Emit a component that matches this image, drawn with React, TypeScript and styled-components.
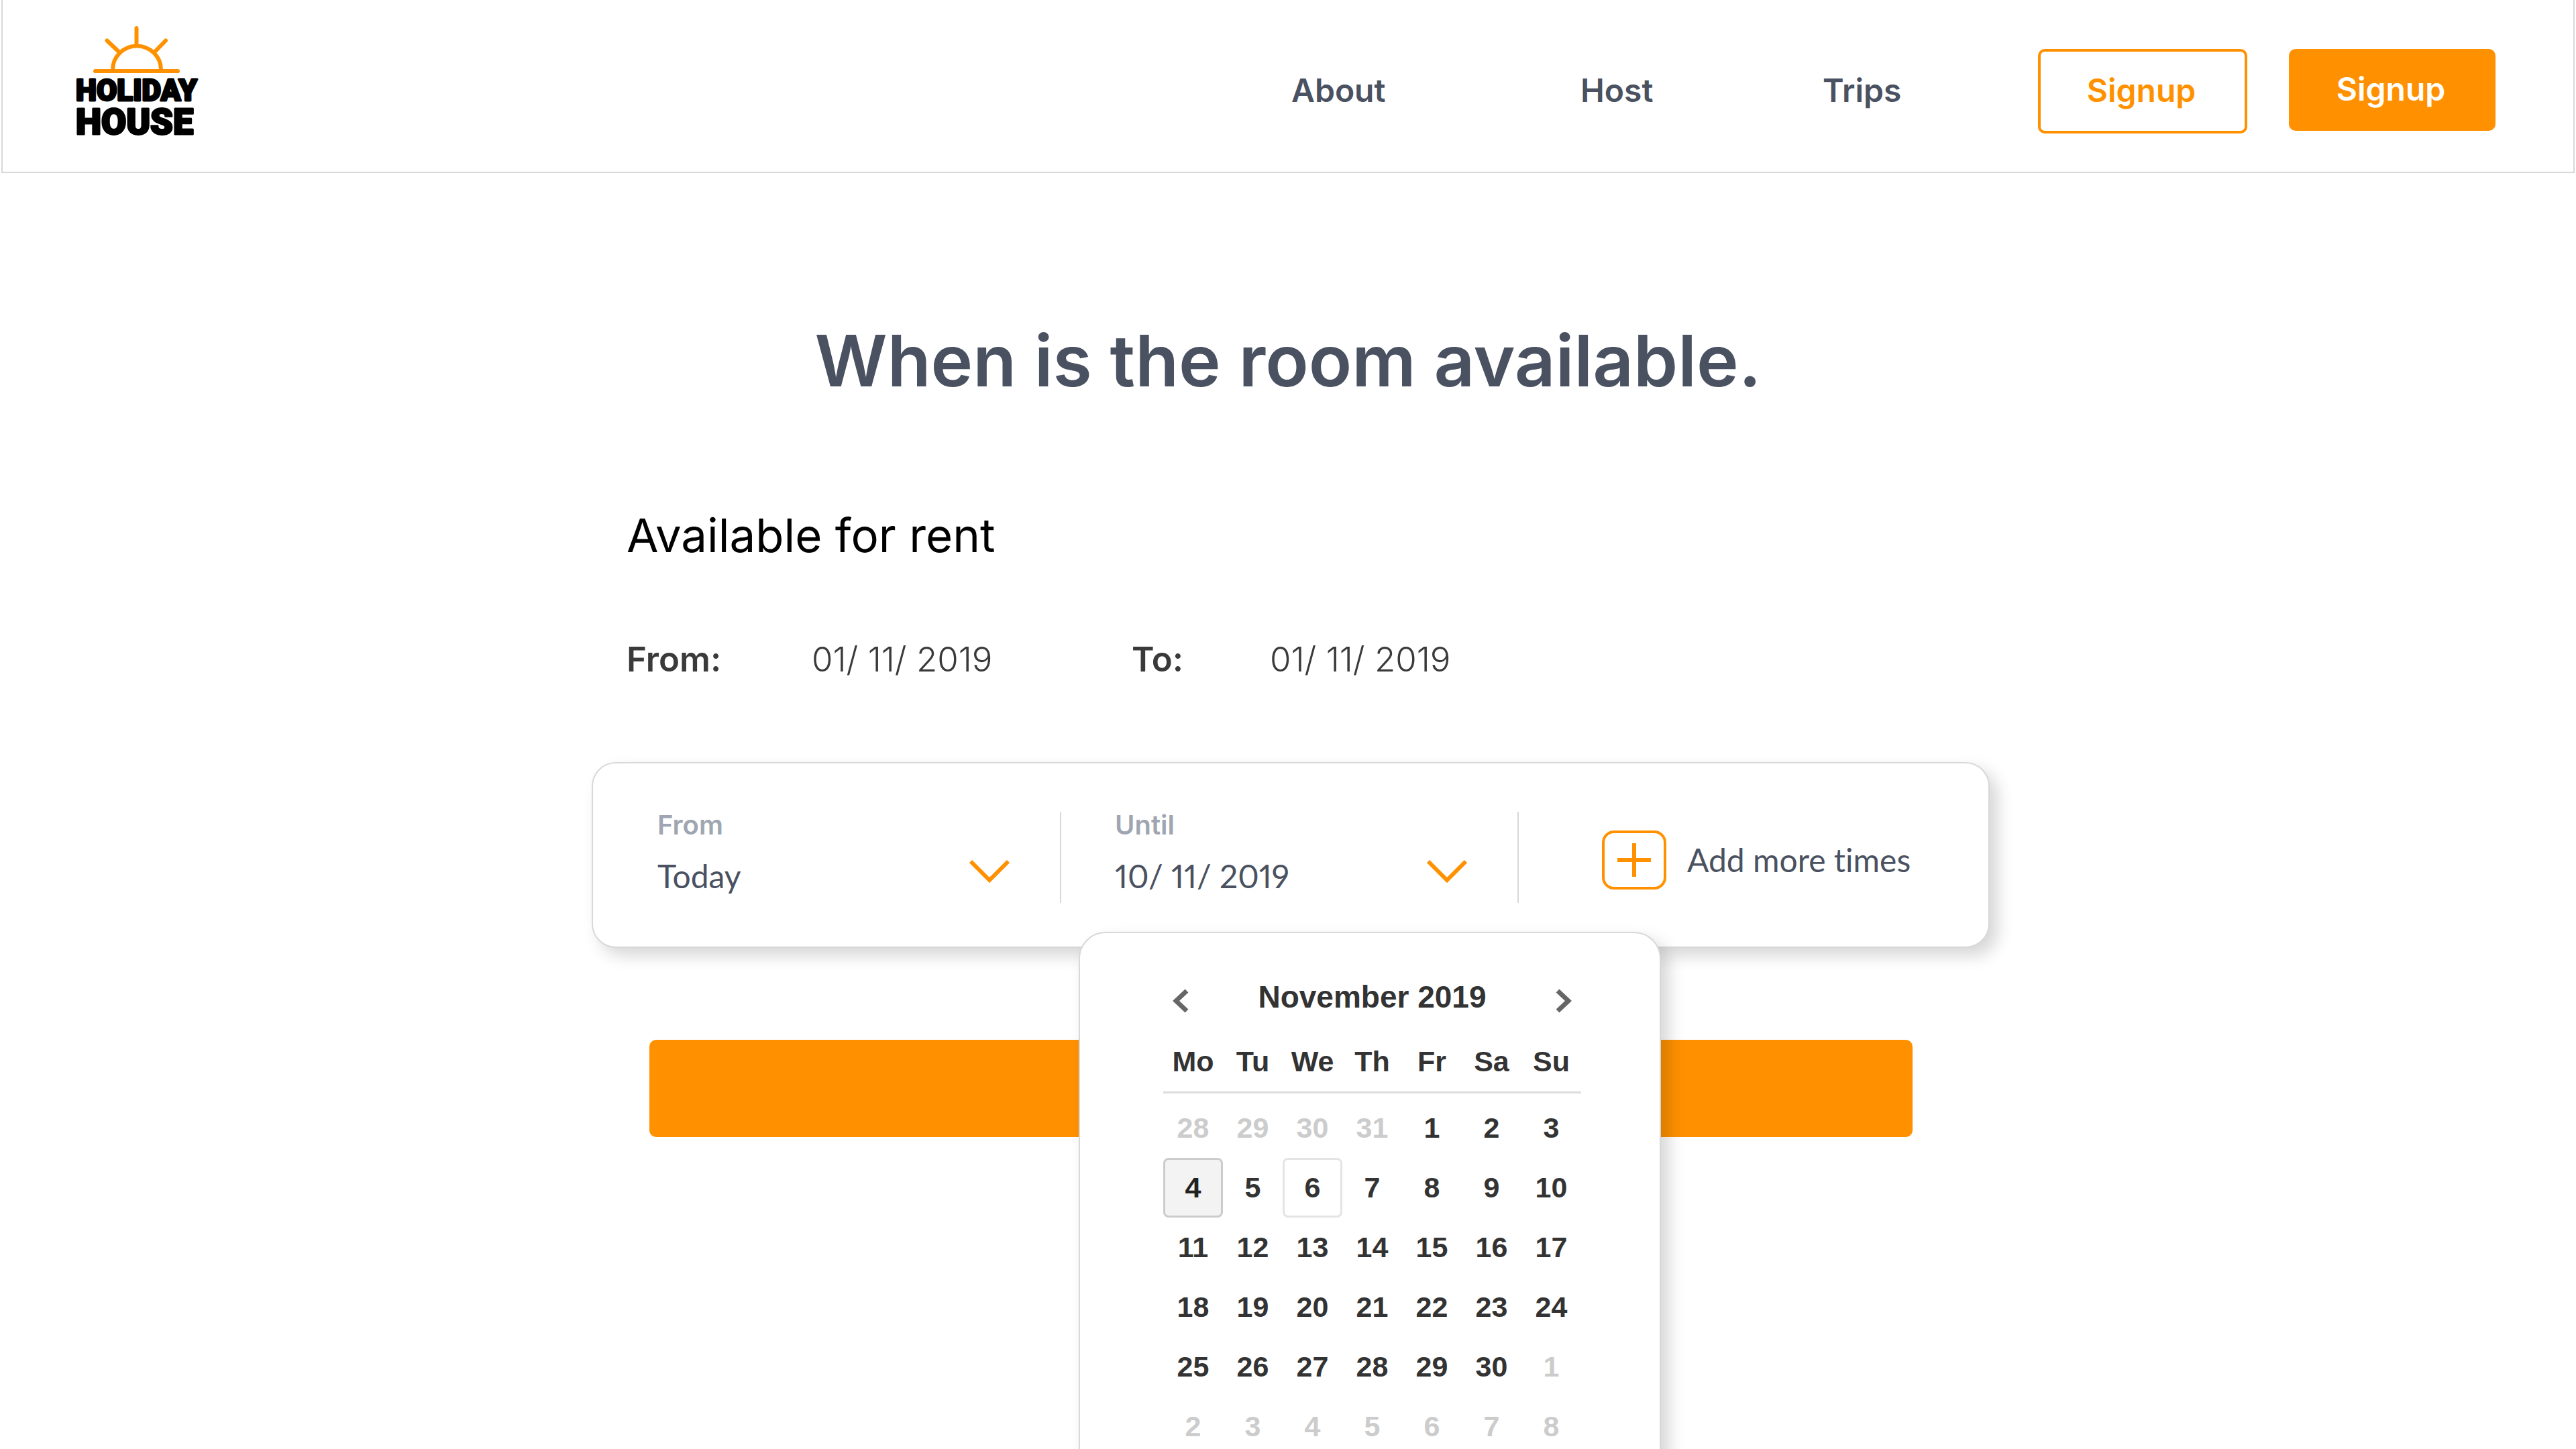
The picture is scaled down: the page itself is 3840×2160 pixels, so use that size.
import React from "react";
import styled, { createGlobalStyle, css } from "styled-components";

const color = {
  orange: "#ff9100",
  slate: "#4a5160",
  muted: "#9fa6b1",
  line: "#d8d8d8",
  ink: "#3a3a3a",
};

const GlobalStyle = createGlobalStyle`
  *, *::before, *::after { box-sizing: border-box; }
  body {
    margin: 0;
    background: #fff;
    color: ${color.slate};
    font-family: Inter, "Liberation Sans", sans-serif;
  }
  button, select { font: inherit; color: inherit; cursor: pointer; }
`;

const Page = styled.div`
  min-height: 100vh;
  overflow: hidden;
`;

const Header = styled.header`
  display: flex;
  align-items: flex-start;
  justify-content: space-between;
  margin: 0 2px;
  padding: 36px 116px 40px 108px;
  border: 2px solid ${color.line};
  border-top: 0;
`;

const LogoLink = styled.a`
  display: block;
  line-height: 0;
`;

const HeaderActions = styled.div`
  display: flex;
  padding-top: 37px;
`;

const Nav = styled.nav`
  display: grid;
  grid-template-columns: 431px 361px 321px;
  align-items: center;
  padding-bottom: 4px;
`;

const NavLink = styled.a`
  color: ${color.slate};
  font-size: 48px;
  font-weight: 600;
  text-decoration: none;
`;

const ButtonGroup = styled.div`
  display: flex;
  align-items: flex-start;
  gap: 62px;
`;

const SignupButton = styled.button<{ $filled?: boolean }>`
  width: ${(p) => (p.$filled ? 308 : 312)}px;
  height: ${(p) => (p.$filled ? 122 : 126)}px;
  padding: 0 4px 4px 0;
  border: ${(p) => (p.$filled ? "0" : `4px solid ${color.orange}`)};
  border-radius: 10px;
  background: ${(p) => (p.$filled ? color.orange : "#fff")};
  color: ${(p) => (p.$filled ? "#fff" : color.orange)};
  font-size: 48px;
  font-weight: 600;
`;

const Title = styled.h1`
  margin: 216px 0 0;
  font-size: 106px;
  font-weight: 600;
  line-height: 128px;
  text-align: center;
`;

const Main = styled.main`
  padding-left: 8px;
`;

const Column = styled.div`
  width: 2084px;
  max-width: 100%;
  margin: 154px auto 0;
`;

const Subtitle = styled.h2`
  margin: 0;
  padding-left: 52px;
  color: #000;
  font-size: 69px;
  font-weight: 400;
  line-height: 84px;
`;

const DateSummary = styled.dl`
  display: grid;
  grid-template-columns: 276px 477px 206px auto;
  margin: 113px 0 0;
  padding-left: 52px;
  color: ${color.ink};
  font-size: 51px;
  line-height: 60px;
`;

const SummaryLabel = styled.dt`
  font-weight: 600;
`;

const SummaryDate = styled.dd`
  margin: 0;
  font-weight: 300;
`;

const surface = css`
  border: 2px solid ${color.line};
  background: #fff;
  box-shadow: 12px 12px 24px rgba(0, 0, 0, 0.16);
`;

const RangeCard = styled.form`
  ${surface}
  display: flex;
  margin-top: 123px;
  padding: 72px 0 65px;
  border-radius: 36px;
`;

const Field = styled.div<{ $wide?: boolean }>`
  position: relative;
  display: flex;
  justify-content: space-between;
  width: ${(p) => (p.$wide ? 698 : 682)}px;
  height: 136px;
  padding-left: ${(p) => (p.$wide ? 96 : 80)}px;
  padding-right: 75px;
  border-right: 2px solid ${color.line};
`;

const FieldText = styled.div`
  flex: 1;
  display: flex;
  flex-direction: column;
  gap: 26px;
`;

const FieldLabel = styled.label`
  color: ${color.muted};
  font-size: 40px;
  font-weight: 600;
  line-height: 40px;
`;

const valueText = css`
  color: ${color.slate};
  font-family: Lato, "Noto Sans", sans-serif;
  font-size: 48px;
  font-weight: 400;
  font-variant-ligatures: none;
  font-variant-numeric: proportional-nums;
  line-height: 60px;
`;

const valueControl = css`
  ${valueText}
  width: 100%;
  height: 60px;
  padding: 0;
  border: 0;
  background: transparent;
  text-align: left;
`;

const FieldSelect = styled.select`
  ${valueControl}
  appearance: none;
`;

const FieldButton = styled.button`
  ${valueControl}
`;

const ChevronIcon = styled.svg`
  flex: none;
  align-self: flex-end;
  margin-bottom: 29px;
  pointer-events: none;
`;

const AddButton = styled.button`
  ${valueText}
  display: flex;
  align-items: center;
  gap: 31px;
  padding: 8px 0 0;
  margin-left: 124px;
  border: 0;
  background: transparent;
`;

const SubmitButton = styled.button`
  display: block;
  width: calc(100% - 201px);
  height: 145px;
  margin: 137px 0 0 86px;
  border: 0;
  border-radius: 10px;
  background: ${color.orange};
`;

const CalendarPopup = styled.div`
  ${surface}
  position: absolute;
  top: 179px;
  left: 26px;
  z-index: 2;
  width: 868px;
  padding: 67px 117px 64px 124px;
  border-radius: 40px;
  color: #333;
  font-family: "Liberation Sans", Arial, sans-serif;
  font-weight: 700;
`;

const CalendarHeader = styled.div`
  display: flex;
  justify-content: space-between;
  height: 56px;
  padding: 0 14px;
`;

const Month = styled.div`
  font-size: 46px;
  line-height: 56px;
`;

const StepButton = styled.button`
  padding: 12px 0 0;
  border: 0;
  background: transparent;
  line-height: 0;
`;

const CalendarTable = styled.table`
  width: 100%;
  border-spacing: 0;
  table-layout: fixed;
  font-size: 43px;

  tbody::before {
    content: "";
    display: block;
    height: 7px;
  }
`;

const Weekday = styled.th`
  padding: 40px 0 17px;
  border-bottom: 3px solid #ddd;
  line-height: 56px;
`;

const DayCell = styled.td`
  padding: 0;
`;

type DayState = "selected" | "today" | "outside" | "normal";

const dayBorder: Record<DayState, string> = {
  selected: "#ccc",
  today: "#e4e4e4",
  outside: "transparent",
  normal: "transparent",
};

const Day = styled.button<{ $state: DayState }>`
  display: block;
  width: 100%;
  height: 89px;
  padding: 0;
  border: 3px solid ${(p) => dayBorder[p.$state]};
  border-radius: 8px;
  background: ${(p) => (p.$state === "selected" ? "#f3f3f3" : "transparent")};
  color: ${(p) =>
    p.$state === "outside" ? "#ccc" : p.$state === "selected" ? "#222" : "#333"};
`;

const LogoText = styled.text`
  fill: #000;
  stroke: #000;
  stroke-width: 3px;
  stroke-linejoin: round;
  font-family: Roboto, sans-serif;
  font-weight: 900;
`;

function Logo() {
  return (
    <svg width="190" height="180" viewBox="112 36 190 180" role="img" aria-label="Holiday House">
      <g fill="none" stroke={color.orange} strokeWidth="6" strokeLinecap="round">
        <path d="M142 106H265" />
        <path d="M168 106V104a36 35.500 0 0 1 72 0v2" />
        <path d="M203.500 42V68M159.500 60.500 178 78M247 60.500 230 78" />
      </g>
      <LogoText x="113" y="150" fontSize="44">HOLIDAY</LogoText>
      <LogoText x="113" y="200" fontSize="54">HOUSE</LogoText>
    </svg>
  );
}

function Chevron() {
  return (
    <ChevronIcon width="60" height="36" viewBox="0 0 60 36" aria-hidden="true">
      <path d="M2 3 30 31 58 3" fill="none" stroke={color.orange} strokeWidth="6" />
    </ChevronIcon>
  );
}

function PlusIcon() {
  return (
    <svg width="96" height="88" viewBox="0 0 96 88" fill="none" stroke={color.orange} aria-hidden="true">
      <rect x="2" y="2" width="92" height="84" rx="16" strokeWidth="4" />
      <path d="M23 44H73M48 19V69" strokeWidth="6" />
    </svg>
  );
}

function StepIcon({ direction }: { direction: "left" | "right" }) {
  return (
    <svg width="24" height="36" viewBox="0 0 24 36" fill="none" stroke="#666" strokeWidth="7" aria-hidden="true">
      <path d={direction === "left" ? "M21 3 5 18 21 33" : "M3 3 19 18 3 33"} />
    </svg>
  );
}

const weekdays = ["Mo", "Tu", "We", "Th", "Fr", "Sa", "Su"];

const weeks = Array.from({ length: 6 }, (_, week) =>
  weekdays.map((_, day) => {
    const date = new Date(2019, 9, 28 + week * 7 + day);
    return { number: date.getDate(), outside: date.getMonth() !== 10 };
  })
);

function stateOf(day: { number: number; outside: boolean }): DayState {
  if (day.outside) return "outside";
  if (day.number === 4) return "selected";
  if (day.number === 6) return "today";
  return "normal";
}

function Calendar() {
  return (
    <CalendarPopup role="dialog" aria-label="Choose a date">
      <CalendarHeader>
        <StepButton type="button" aria-label="Previous month">
          <StepIcon direction="left" />
        </StepButton>
        <Month>November 2019</Month>
        <StepButton type="button" aria-label="Next month">
          <StepIcon direction="right" />
        </StepButton>
      </CalendarHeader>
      <CalendarTable>
        <thead>
          <tr>
            {weekdays.map((name) => (
              <Weekday key={name} scope="col">{name}</Weekday>
            ))}
          </tr>
        </thead>
        <tbody>
          {weeks.map((week, i) => (
            <tr key={i}>
              {week.map((day) => (
                <DayCell key={day.number}>
                  <Day type="button" $state={stateOf(day)}>{day.number}</Day>
                </DayCell>
              ))}
            </tr>
          ))}
        </tbody>
      </CalendarTable>
    </CalendarPopup>
  );
}

export default function App() {
  return (
    <Page>
      <GlobalStyle />
      <Header>
        <LogoLink href="#">
          <Logo />
        </LogoLink>
        <HeaderActions>
          <Nav>
            <NavLink href="#about">About</NavLink>
            <NavLink href="#host">Host</NavLink>
            <NavLink href="#trips">Trips</NavLink>
          </Nav>
          <ButtonGroup>
            <SignupButton type="button">Signup</SignupButton>
            <SignupButton type="button" $filled>Signup</SignupButton>
          </ButtonGroup>
        </HeaderActions>
      </Header>
      <Title>When is the room available.</Title>
      <Main>
        <Column>
          <Subtitle>Available for rent</Subtitle>
          <DateSummary>
            <SummaryLabel>From:</SummaryLabel>
            <SummaryDate>01/ 11/ 2019</SummaryDate>
            <SummaryLabel>To:</SummaryLabel>
            <SummaryDate>01/ 11/ 2019</SummaryDate>
          </DateSummary>
          <RangeCard>
            <Field $wide>
              <FieldText>
                <FieldLabel htmlFor="from">From</FieldLabel>
                <FieldSelect id="from" defaultValue="today">
                  <option value="today">Today</option>
                </FieldSelect>
              </FieldText>
              <Chevron />
            </Field>
            <Field>
              <FieldText>
                <FieldLabel htmlFor="until">Until</FieldLabel>
                <FieldButton id="until" type="button" aria-haspopup="dialog" aria-expanded="true">
                  10/ 11/ 2019
                </FieldButton>
              </FieldText>
              <Chevron />
              <Calendar />
            </Field>
            <AddButton type="button">
              <PlusIcon />
              Add more times
            </AddButton>
          </RangeCard>
          <SubmitButton type="button" aria-label="Continue" />
        </Column>
      </Main>
    </Page>
  );
}
